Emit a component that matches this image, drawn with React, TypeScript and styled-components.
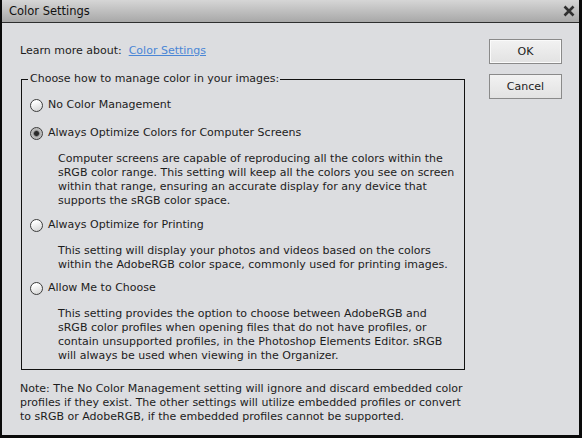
import React from 'react';
import styled, { createGlobalStyle } from 'styled-components';

const Global = createGlobalStyle`
  html, body { margin: 0; padding: 0; background: #000; }
  body { font-family: Tahoma, "DejaVu Sans", sans-serif; font-size: 11px; color: #1c1c1c; }
`;

const Window = styled.div`
  width: 582px;
  height: 438px;
  box-sizing: border-box;
  border-left: 2px solid #0a0a0a;
  border-right: 3px solid #0a0a0a;
  border-bottom: 3px solid #0a0a0a;
  display: flex;
  flex-direction: column;
  background: #dcdde0;
`;

const TitleBar = styled.div`
  height: 22px;
  flex: none;
  border-bottom: 1px solid #2e2e2e;
  background: linear-gradient(#d6d6d6, #a8a8a8);
  display: flex;
  align-items: center;
  justify-content: space-between;
  padding: 0 4px 0 7px;
`;

const Title = styled.span`
  font-size: 11.5px;
  color: #111;
`;

const Body = styled.div`
  flex: 1;
  display: flex;
  justify-content: space-between;
  padding: 0 17px 0 18px;
`;

const Main = styled.div`
  width: 445px;
  padding-top: 21px;
  display: flex;
  flex-direction: column;
`;

const Line = styled.div`
  line-height: 14px;
  white-space: nowrap;
`;

const Link = styled.a`
  margin-left: 7px;
  color: #4a86d6;
  text-decoration: underline;
  cursor: pointer;
`;

const Group = styled.fieldset`
  margin: 14px 0 0 1px;
  width: 444px;
  box-sizing: border-box;
  border: 1px solid #111;
  padding: 12px 8px 6px 8px;
  min-width: 0;
`;

const Legend = styled.legend`
  margin-left: -2px;
  padding: 0 1px 0 2px;
  line-height: 14px;
`;

const Option = styled.div<{ $gap: number }>`
  margin-top: ${p => p.$gap}px;
`;

const RadioRow = styled.label`
  display: flex;
  align-items: center;
  gap: 5px;
  height: 14px;
  line-height: 14px;
  white-space: nowrap;
`;

const RadioDot = styled.span<{ $checked?: boolean }>`
  width: 13px;
  height: 13px;
  box-sizing: border-box;
  border-radius: 50%;
  border: 1px solid #3c3c3c;
  background: ${p => p.$checked
    ? 'radial-gradient(circle, #2a2a2a 0 2px, #6a6a6a 2.6px, #b4b4b4 3.5px, #cfcfcf 100%)'
    : 'linear-gradient(160deg, #ffffff 20%, #d2d2d2 100%)'};
  flex: none;
`;

const Desc = styled.div`
  margin: 12px 0 0 28px;
  line-height: 14px;
  white-space: nowrap;
`;

const Note = styled.div`
  margin-top: 12px;
  line-height: 14px;
  white-space: nowrap;
`;

const Side = styled.div`
  width: 73px;
  padding-top: 16px;
  display: flex;
  flex-direction: column;
  gap: 10px;
`;

const Button = styled.button<{ $default?: boolean }>`
  width: 73px;
  height: 25px;
  box-sizing: border-box;
  font: inherit;
  color: #1c1c1c;
  border: 1px solid #8a8a8a;
  background: linear-gradient(#f2f2f2, #e2e2e2);
  box-shadow: ${p => (p.$default ? 'inset 0 0 0 1px #fafafa' : 'none')};
  padding: 0;
  cursor: pointer;
`;

const CloseIcon = () => (
  <svg width="12" height="12" viewBox="0 0 12 12">
    <path d="M1.5 1.5 L10.5 10.5 M10.5 1.5 L1.5 10.5" stroke="#303030" strokeWidth="2.6" strokeLinecap="butt" />
  </svg>
);

const options = [
  { label: 'No Color Management', checked: false, desc: [] as string[], gap: 0 },
  {
    label: 'Always Optimize Colors for Computer Screens',
    checked: true,
    gap: 14,
    desc: [
      'Computer screens are capable of reproducing all the colors within the',
      'sRGB color range. This setting will keep all the colors you see on screen',
      'within that range, ensuring an accurate display for any device that',
      'supports the sRGB color space.',
    ],
  },
  {
    label: 'Always Optimize for Printing',
    checked: false,
    gap: 10,
    desc: [
      'This setting will display your photos and videos based on the colors',
      'within the AdobeRGB color space, commonly used for printing images.',
    ],
  },
  {
    label: 'Allow Me to Choose',
    checked: false,
    gap: 9,
    desc: [
      'This setting provides the option to choose between AdobeRGB and',
      'sRGB color profiles when opening files that do not have profiles, or',
      'contain unsupported profiles, in the Photoshop Elements Editor. sRGB',
      'will always be used when viewing in the Organizer.',
    ],
  },
];

const noteLines = [
  'Note: The No Color Management setting will ignore and discard embedded color',
  'profiles if they exist. The other settings will utilize embedded profiles or convert',
  'to sRGB or AdobeRGB, if the embedded profiles cannot be supported.',
];

export default function App() {
  return (
    <>
      <Global />
      <Window>
        <TitleBar>
          <Title>Color Settings</Title>
          <CloseIcon />
        </TitleBar>
        <Body>
          <Main>
            <Line>
              Learn more about:<Link>Color Settings</Link>
            </Line>
            <Group>
              <Legend>Choose how to manage color in your images:</Legend>
              {options.map(o => (
                <Option key={o.label} $gap={o.gap}>
                  <RadioRow>
                    <RadioDot $checked={o.checked} />
                    {o.label}
                  </RadioRow>
                  {o.desc.length > 0 && (
                    <Desc>
                      {o.desc.map(l => (
                        <div key={l}>{l}</div>
                      ))}
                    </Desc>
                  )}
                </Option>
              ))}
            </Group>
            <Note>
              {noteLines.map(l => (
                <div key={l}>{l}</div>
              ))}
            </Note>
          </Main>
          <Side>
            <Button $default>OK</Button>
            <Button>Cancel</Button>
          </Side>
        </Body>
      </Window>
    </>
  );
}
